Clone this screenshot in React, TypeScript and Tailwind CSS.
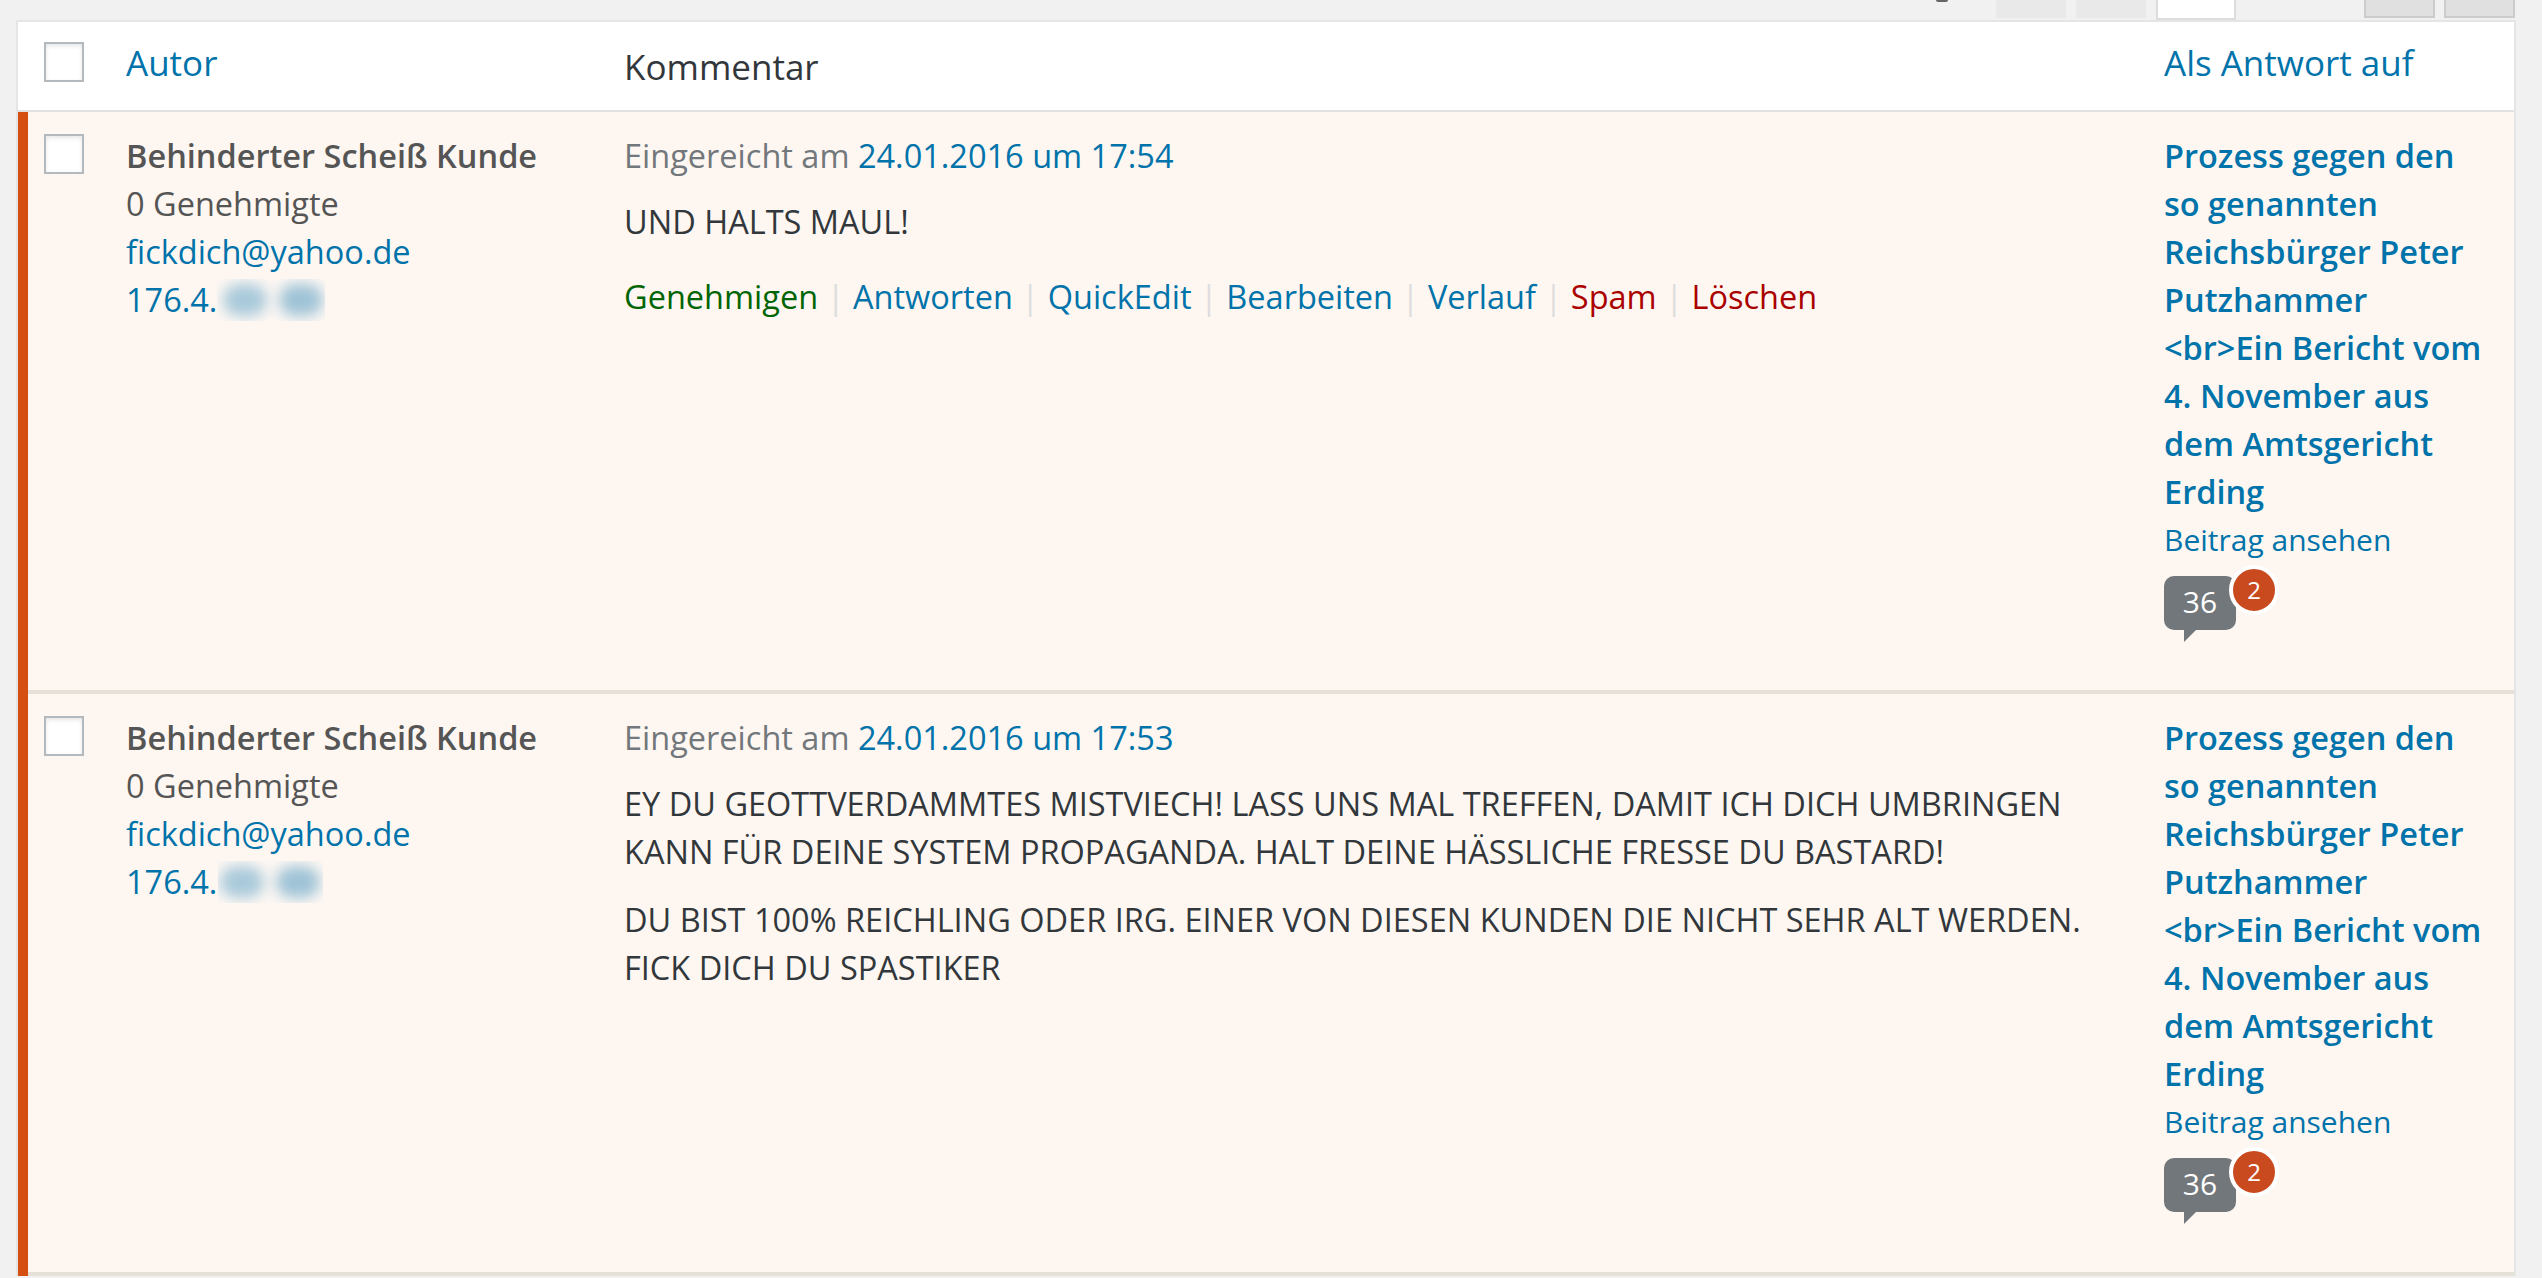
import React from 'react';

const actions = [
  { label: 'Genehmigen', color: 'text-[#006505]' },
  { label: 'Antworten', color: 'text-[#0073aa]' },
  { label: 'QuickEdit', color: 'text-[#0073aa]' },
  { label: 'Bearbeiten', color: 'text-[#0073aa]' },
  { label: 'Verlauf', color: 'text-[#0073aa]' },
  { label: 'Spam', color: 'text-[#a00]' },
  { label: 'Löschen', color: 'text-[#a00]' },
];

const Checkbox: React.FC = () => (
  <div className="h-10 w-10 shrink-0 border-2 border-[#b4b9be] bg-white shadow-[inset_0_2px_4px_rgba(0,0,0,0.1)]" />
);

const BlurredIp: React.FC<{ ip: string; covered?: boolean }> = ({ ip, covered }) => (
  <div className="flex items-center">
    <span>{ip}</span>
    <span
      className={`flex h-[42px] items-center gap-3 overflow-hidden bg-[#fdf8f4] ${
        covered ? 'ml-[-9px] w-[105px] pl-[2px]' : 'w-[108px] pl-[6px]'
      }`}
    >
      <span className="h-8 w-11 shrink-0 rounded-full bg-[#a9c9da] blur-[7px]" />
      <span className="h-8 w-11 shrink-0 rounded-full bg-[#9fc3d6] blur-[7px]" />
    </span>
  </div>
);

const Bubble: React.FC = () => (
  <div className="relative mt-[12px] h-[66px] w-[72px]">
    <div className="flex h-[54px] w-[72px] items-center justify-center rounded-[10px] bg-[#72777c] pb-[2px] text-[30px] leading-none text-white">
      36
    </div>
    <svg className="absolute left-5 top-[54px]" width="12" height="12" viewBox="0 0 12 12">
      <path d="M0 0H12L0 12Z" fill="#72777c" />
    </svg>
    <div className="absolute left-[65px] top-[-11px] flex h-[50px] w-[50px] items-center justify-center rounded-full border-4 border-white bg-[#ca4a1f] text-[24px] font-medium leading-none text-white">
      2
    </div>
  </div>
);

const Row: React.FC<{
  time: string;
  ip: string;
  paragraphs: string[];
  showActions?: boolean;
  covered?: boolean;
}> = ({ time, ip, paragraphs, showActions, covered }) => (
  <div className="border-l-[10px] border-[#d54e12] bg-[#fef7f1]">
    <div className="flex h-[582px] border-b-4 border-[#e5e0d8] pt-[20px]">
      <div className="w-[98px] shrink-0 pl-4 pt-[2px]">
        <Checkbox />
      </div>
      <div className="w-[498px] shrink-0 text-[#555]">
        <div className="font-semibold">Behinderter Scheiß Kunde</div>
        <div>0 Genehmigte</div>
        <div className="text-[#0073aa]">fickdich@yahoo.de</div>
        <div className="text-[#0073aa]">
          <BlurredIp ip={ip} covered={covered} />
        </div>
      </div>
      <div className="w-[1540px] shrink-0 pr-6">
        <div className="text-[#72777c]">
          Eingereicht am <span className="text-[#0073aa]">{time}</span>
        </div>
        {paragraphs.map((p, i) => (
          <p key={i} className={`text-[#32373c] ${i === 0 ? 'mt-[18px]' : 'mt-5'}`}>
            {p}
          </p>
        ))}
        {showActions && (
          <div className="mt-[27px] flex">
            {actions.map((a, i) => (
              <React.Fragment key={a.label}>
                {i > 0 && <span className="mx-[8.5px] text-[#ddd]">|</span>}
                <span className={a.color}>{a.label}</span>
              </React.Fragment>
            ))}
          </div>
        )}
      </div>
      <div className="w-[320px] shrink-0">
        <div className="font-semibold text-[#0073aa]">
          Prozess gegen den so genannten Reichsbürger Peter Putzhammer &lt;br&gt;Ein Bericht vom 4. November aus dem
          Amtsgericht Erding
        </div>
        <div className="text-[30px] text-[#0073aa]">Beitrag ansehen</div>
        <Bubble />
      </div>
    </div>
  </div>
);

export default function App() {
  return (
    <div className="h-[1278px] overflow-hidden bg-[#f1f1f1] font-['Open_Sans',sans-serif] text-[32.5px] leading-[48px]">
      {/* Cut off pagination row */}
      <div className="flex h-5 pr-[26px]">
        <div className="ml-[1936px] h-[2px] w-3 rounded-b-full bg-[#666]" />
        <div className="ml-[48px] h-[18px] w-[70px] bg-[#e9e9e9]" />
        <div className="ml-[10px] h-[18px] w-[70px] bg-[#e9e9e9]" />
        <div className="ml-[10px] h-[20px] w-[80px] border-x-2 border-b-2 border-[#ddd] bg-white" />
        <div className="ml-[128px] h-[18px] w-[71px] border-x-2 border-b-2 border-[#ccc] bg-[#e0e0e0]" />
        <div className="ml-[9px] h-[18px] w-[71px] border-x-2 border-b-2 border-[#ccc] bg-[#e0e0e0]" />
      </div>

      <div className="ml-[16px] w-[2500px] border-2 border-b-0 border-[#e5e5e5]">
        {/* Table header */}
        <div className="flex h-[90px] border-b-2 border-[#e1e1e1] bg-white text-[35px]">
          <div className="w-[108px] shrink-0 pl-[26px] pt-5">
            <Checkbox />
          </div>
          <div className="w-[498px] shrink-0 pt-[17px] text-[#0073aa]">Autor</div>
          <div className="w-[1540px] shrink-0 pt-[21px] text-[#32373c]">Kommentar</div>
          <div className="pt-[17px] text-[#0073aa]">Als Antwort auf</div>
        </div>

        <Row time="24.01.2016 um 17:54" ip="176.4." paragraphs={['UND HALTS MAUL!']} showActions />
        <Row
          time="24.01.2016 um 17:53"
          ip="176.4.("
          covered
          paragraphs={[
            'EY DU GEOTTVERDAMMTES MISTVIECH! LASS UNS MAL TREFFEN, DAMIT ICH DICH UMBRINGEN KANN FÜR DEINE SYSTEM PROPAGANDA. HALT DEINE HÄSSLICHE FRESSE DU BASTARD!',
            'DU BIST 100% REICHLING ODER IRG. EINER VON DIESEN KUNDEN DIE NICHT SEHR ALT WERDEN. FICK DICH DU SPASTIKER',
          ]}
        />
      </div>
    </div>
  );
}
